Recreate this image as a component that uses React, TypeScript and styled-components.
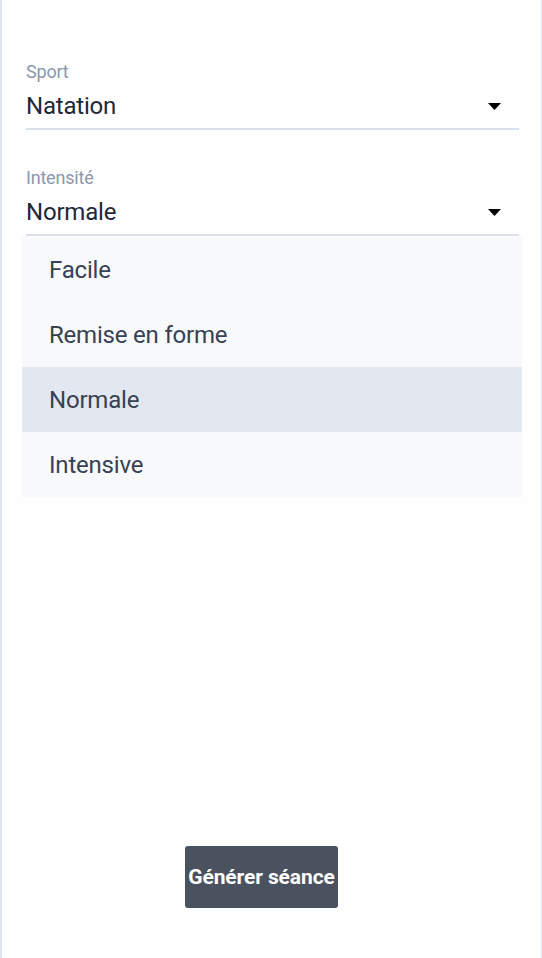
import React from "react";
import styled, { createGlobalStyle } from "styled-components";

const Global = createGlobalStyle`
  html, body { margin: 0; padding: 0; background: #ffffff; }
  body { font-family: Roboto, "Liberation Sans", Arial, sans-serif; }
  * { box-sizing: border-box; }
`;

const Page = styled.div`
  width: 542px;
  height: 958px;
  display: flex;
  flex-direction: column;
  background: #fefefe;
  border-left: 2px solid #e1e6ee;
  border-right: 1px solid #e4e7ec;
  padding: 61px 22px 0 24px;
`;

const Form = styled.div`
  display: flex;
  flex-direction: column;
  gap: 37px;
`;

const Field = styled.div`
  position: relative;
  display: flex;
  flex-direction: column;
`;

const Label = styled.div`
  font-size: 18px;
  line-height: 21px;
  color: #8a98ac;
  letter-spacing: -0.2px;
`;

const Select = styled.div`
  display: flex;
  align-items: center;
  justify-content: space-between;
  padding: 10px 18px 8px 0;
  line-height: 28px;
  border-bottom: 2px solid #dae1ea;
`;

const Value = styled.span`
  font-size: 24px;
  color: #1e293a;
  letter-spacing: -0.2px;
`;

const Caret = styled.svg`
  width: 13px;
  height: 7px;
  fill: #000;
`;

const Menu = styled.ul`
  position: absolute;
  top: 100%;
  left: -4px;
  width: 500px;
  margin: 1px 0 0;
  padding: 0;
  list-style: none;
  background: #f8f9fb;
  z-index: 2;
`;

const Item = styled.li<{ $active?: boolean }>`
  height: 65px;
  display: flex;
  align-items: center;
  padding-left: 27px;
  font-size: 24px;
  color: #374253;
  letter-spacing: -0.2px;
  background: ${(p) => (p.$active ? "#e3e7f0" : "transparent")};
`;

const Footer = styled.div`
  margin-top: auto;
  display: flex;
  justify-content: center;
  padding: 0 22px 50px 0;
`;

const Button = styled.button`
  height: 62px;
  padding: 0 3px;
  border: none;
  border-radius: 3px;
  background: #4a525f;
  color: #ffffff;
  font-family: Roboto, "Liberation Sans", Arial, sans-serif;
  font-weight: 700;
  font-size: 21px;
  letter-spacing: -0.1px;
  white-space: nowrap;
`;

const CaretIcon = () => (
  <Caret viewBox="0 0 13 7">
    <path d="M0 0 H13 L6.5 7 Z" />
  </Caret>
);

const options = ["Facile", "Remise en forme", "Normale", "Intensive"];

export default function App() {
  return (
    <>
      <Global />
      <Page>
        <Form>
          <Field>
            <Label>Sport</Label>
            <Select>
              <Value>Natation</Value>
              <CaretIcon />
            </Select>
          </Field>
          <Field>
            <Label>Intensité</Label>
            <Select>
              <Value>Normale</Value>
              <CaretIcon />
            </Select>
            <Menu>
              {options.map((o) => (
                <Item key={o} $active={o === "Normale"}>
                  {o}
                </Item>
              ))}
            </Menu>
          </Field>
        </Form>
        <Footer>
          <Button>Générer séance</Button>
        </Footer>
      </Page>
    </>
  );
}
